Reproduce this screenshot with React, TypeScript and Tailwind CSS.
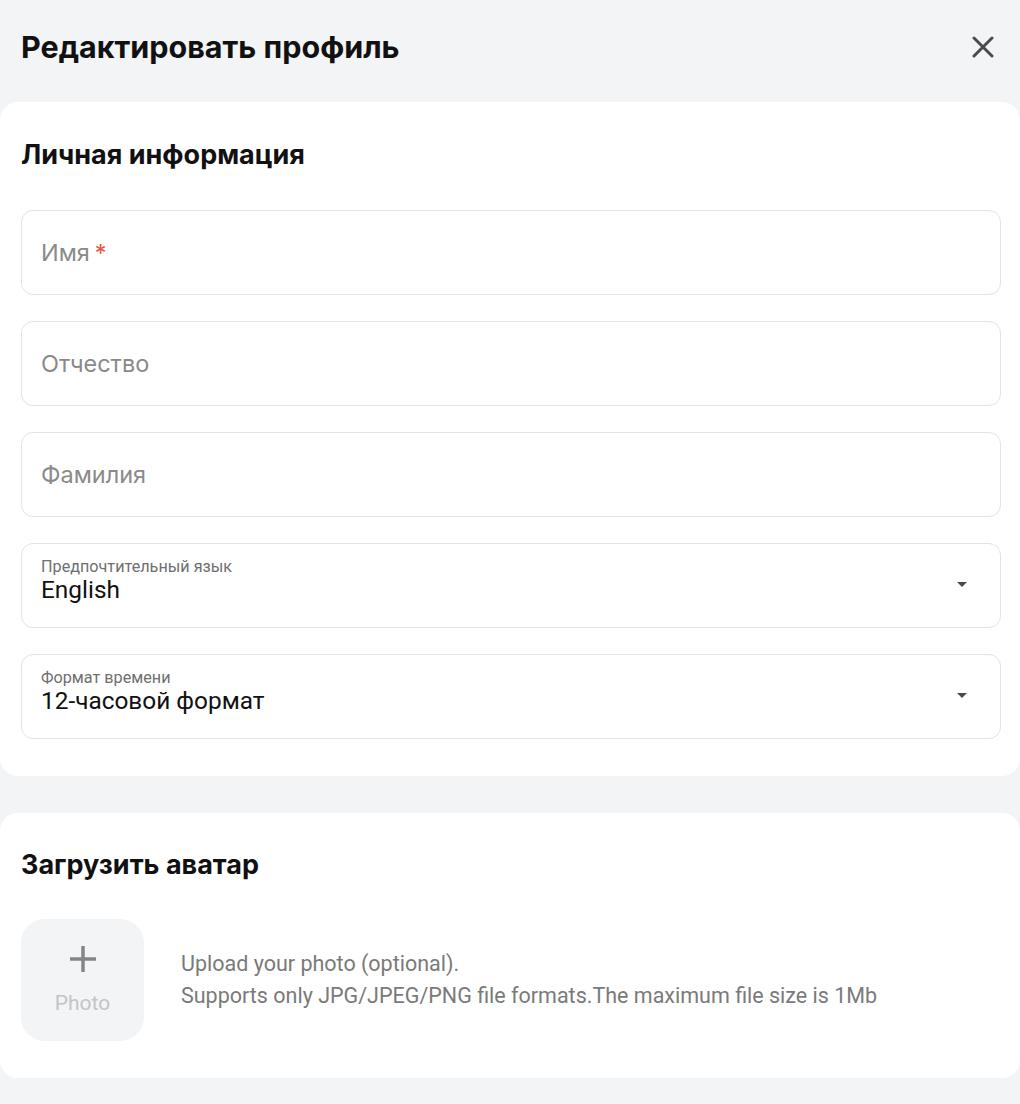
import React from "react";

const heading = "font-['Inter','Liberation_Sans',sans-serif]";
const roboto = "font-['Roboto','Liberation_Sans',sans-serif]";

function TextField({ label, required }: { label: string; required?: boolean }) {
  return (
    <div className="h-[85px] rounded-[12px] border border-[#e1e3e6] bg-white px-[19px] flex items-center">
      <span className={`${heading} text-[23.5px] text-[#8a8a8a]`}>
        {label}
        {required && <span className="text-[#e8533a] ml-[5px]">*</span>}
      </span>
    </div>
  );
}

function SelectField({ label, value }: { label: string; value: string }) {
  return (
    <div className="h-[85px] rounded-[12px] border border-[#e1e3e6] bg-white pl-[19px] pr-[33px] flex items-center justify-between">
      <div className={`${roboto} flex flex-col pb-[10px]`}>
        <span className="text-[16.2px] leading-[18px] text-[#6f6f6f]">{label}</span>
        <span className="text-[24.4px] leading-[28px] text-[#111111]">{value}</span>
      </div>
      <svg width="10" height="6" viewBox="0 0 10 6" className="mb-[2px]">
        <path d="M0 0 H10 L5 5 Z" fill="#4a4a4a" />
      </svg>
    </div>
  );
}

export default function App() {
  return (
    <div className="w-[1020px] h-[1104px] bg-[#f3f4f6] overflow-hidden">
      <div className="h-[102px] flex items-center justify-between pl-[21px] pr-[26px] pb-[8px]">
        <h1 className={`${heading} text-[30.5px] font-bold text-[#111111] leading-[36px]`}>
          Редактировать профиль
        </h1>
        <svg width="22" height="22" viewBox="0 0 22 22">
          <path d="M2 2 L20 20 M20 2 L2 20" stroke="#4b4b4f" strokeWidth="3" strokeLinecap="round" />
        </svg>
      </div>

      <div className="bg-white rounded-[18px] pl-[21px] pr-[19px] pt-[38px] pb-[37px]">
        <h2 className={`${heading} text-[27px] font-bold text-[#111111] leading-[30px]`}>
          Личная информация
        </h2>
        <div className="mt-[40px] flex flex-col gap-[26px]">
          <TextField label="Имя" required />
          <TextField label="Отчество" />
          <TextField label="Фамилия" />
          <SelectField label="Предпочтительный язык" value="English" />
          <SelectField label="Формат времени" value="12-часовой формат" />
        </div>
      </div>

      <div className="mt-[37px] bg-white rounded-[18px] px-[21px] pt-[37px] pb-[37px]">
        <h2 className={`${heading} text-[27px] font-bold text-[#111111] leading-[30px]`}>
          Загрузить аватар
        </h2>
        <div className="mt-[39px] flex items-center gap-[37px]">
          <div className="w-[123px] h-[122px] rounded-[24px] bg-[#f3f4f6] flex flex-col items-center justify-center">
            <svg width="28" height="28" viewBox="0 0 28 28">
              <path d="M14 1 V27 M1 14 H27" stroke="#858585" strokeWidth="3.5" />
            </svg>
            <span className={`${roboto} text-[21px] leading-[24px] text-[#c4c4c4] mt-[18px]`}>Photo</span>
          </div>
          <div className={`${roboto} text-[21.5px] leading-[32px] text-[#7a7a7a]`}>
            <div>Upload your photo (optional).</div>
            <div>Supports only JPG/JPEG/PNG file formats.The maximum file size is 1Mb</div>
          </div>
        </div>
      </div>
    </div>
  );
}
